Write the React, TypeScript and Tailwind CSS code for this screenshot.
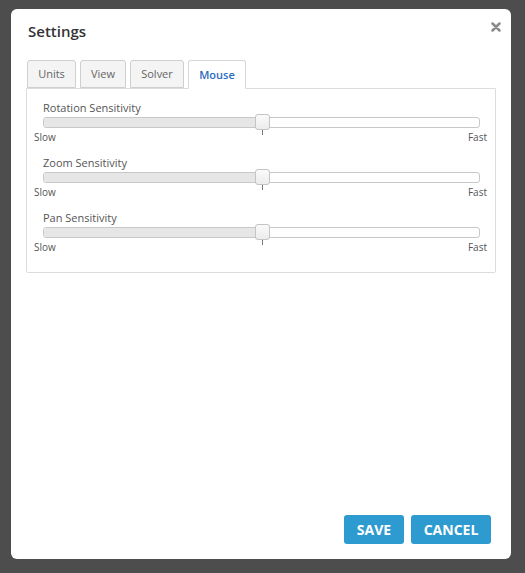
import React, { useState } from 'react';

const font = { fontFamily: '"Open Sans", "Liberation Sans", sans-serif' };

const tabs = [
  { name: 'Units', w: 'w-[49px]' },
  { name: 'View', w: 'w-[46px]' },
  { name: 'Solver', w: 'w-[54px]' },
  { name: 'Mouse', w: 'w-[58px]' },
];

const sliders = [
  { label: 'Rotation Sensitivity', value: 50 },
  { label: 'Zoom Sensitivity', value: 50 },
  { label: 'Pan Sensitivity', value: 50 },
];

const SliderRow = ({ label, value }: { label: string; value: number }) => (
  <div className="mb-[11px]">
    <div className="pl-[9px] text-[11px] leading-[16px] text-[#555]">{label}</div>
    <div className="pl-[9px] pr-[8px] mt-[1px]">
      <div className="relative h-[11px] rounded-[3px] border border-[#c8c8c8] bg-white">
        <div
          className="h-full rounded-l-[3px] bg-[#e6e6e6]"
          style={{ width: `${value}%` }}
        />
        <div
          className="absolute top-[-4px] h-[16px] w-[15px] -ml-[7px] rounded-[3px] border border-[#c4c4c4] bg-gradient-to-b from-[#fafafa] to-[#ececec]"
          style={{ left: `${value}%` }}
        />
        <div
          className="absolute top-[12px] h-[5px] w-px bg-[#777]"
          style={{ left: `${value}%` }}
        />
      </div>
    </div>
    <div className="mt-[2px] flex justify-between pr-px text-[10px] leading-[14px] text-[#555]">
      <span>Slow</span>
      <span>Fast</span>
    </div>
  </div>
);

export default function App() {
  const [active, setActive] = useState('Mouse');

  return (
    <div className="h-[573px] bg-[#4d4d4d] pt-[9px] pl-[11px]" style={font}>
      <div className="relative flex h-[550px] w-[500px] flex-col rounded-[6px] bg-white">
        <button className="absolute right-[10px] top-[13px]">
          <svg width="10" height="10" viewBox="0 0 10 10">
            <path d="M1.5 1.5 L8.5 8.5 M8.5 1.5 L1.5 8.5" stroke="#8a8a8a" strokeWidth="2.5" strokeLinecap="round" />
          </svg>
        </button>

        <h1 className="pl-[17px] pt-[11px] text-[15px] font-semibold leading-[22px] text-[#333]">
          Settings
        </h1>

        <div className="mt-[18px] flex gap-[4px] pl-[16px]">
          {tabs.map((t) => (
            <button
              key={t.name}
              onClick={() => setActive(t.name)}
              className={
                t.name === active
                  ? `relative z-10 -mb-px h-[29px] ${t.w} rounded-t-[3px] border border-b-white border-[#d6d6d6] bg-white pt-[1px] text-[11px] font-semibold text-[#2b6cc0]`
                  : `h-[28px] ${t.w} rounded-t-[3px] border border-[#cfcfcf] bg-[#f4f4f4] pt-[1px] text-[11px] text-[#666]`
              }
            >
              {t.name}
            </button>
          ))}
        </div>

        <div className="ml-[15px] w-[470px] rounded-b-[2px] border border-[#dcdcdc] px-[7px] pt-[11px] pb-[7px]">
          {sliders.map((s) => (
            <SliderRow key={s.label} label={s.label} value={s.value} />
          ))}
        </div>

        <div className="mt-auto flex justify-end gap-[7px] pb-[15px] pr-[20px]">
          <button className="h-[29px] w-[60px] rounded-[3px] bg-[#2d9bcf] text-[14px] font-bold text-white">
            SAVE
          </button>
          <button className="h-[29px] w-[80px] rounded-[3px] bg-[#2d9bcf] text-[14px] font-bold text-white">
            CANCEL
          </button>
        </div>
      </div>
    </div>
  );
}
